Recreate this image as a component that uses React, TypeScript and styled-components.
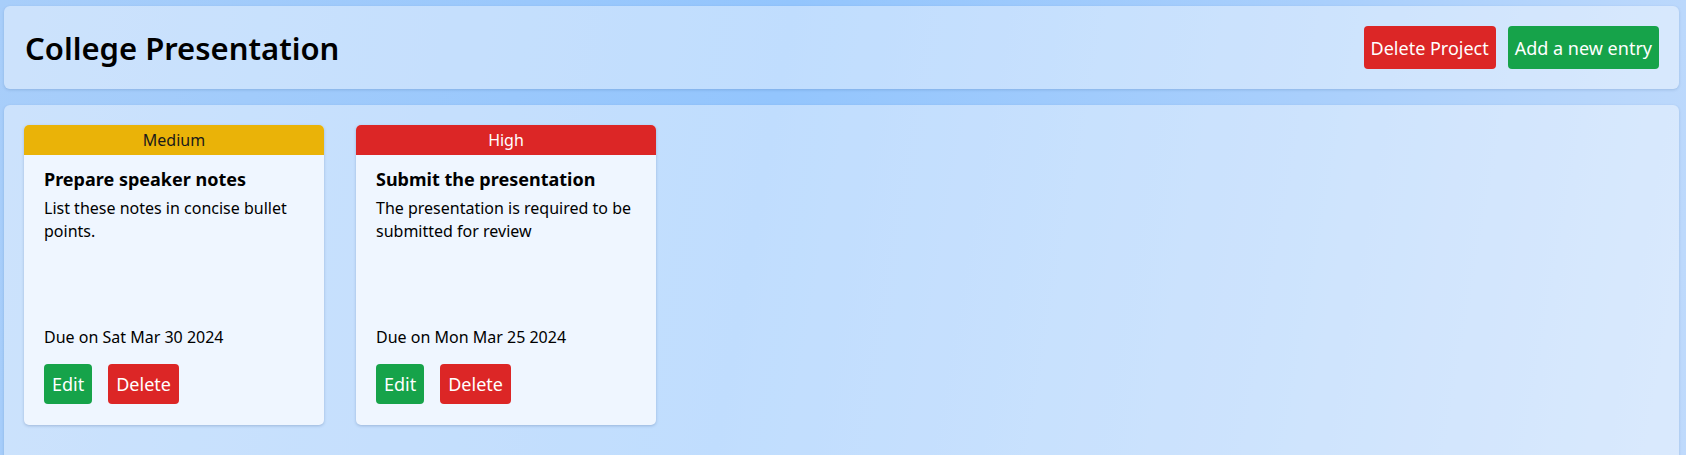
import { createGlobalStyle } from 'styled-components';
import styled from 'styled-components';

const GlobalStyle = createGlobalStyle`
  * {
    box-sizing: border-box;
  }
  html, body {
    margin: 0;
    padding: 0;
    height: 100%;
  }
  body {
    font-family: 'Noto Sans', 'Open Sans', sans-serif;
    color: #000;
    background: linear-gradient(100deg, #a8cefa 0%, #93c5fd 45%, #a9cffc 75%, #bfdafc 100%);
    overflow: hidden;
  }
`;

const green = '#16a34a';
const red = '#dc2626';
const yellow = '#eab308';

const Page = styled.div`
  display: flex;
  flex-direction: column;
  gap: 16px;
  padding: 6px 7px 0 4px;
  min-height: 100vh;
`;

const Panel = styled.div`
  background: rgba(255, 255, 255, 0.42);
  border-radius: 6px;
  box-shadow: 0 1px 3px rgba(30, 64, 120, 0.18);
`;

const Header = styled(Panel)`
  display: flex;
  align-items: center;
  justify-content: space-between;
  height: 83px;
  padding: 0 20px 0 21px;
`;

const Title = styled.h1`
  margin: 0;
  font-size: 31px;
  line-height: 36px;
  font-weight: 600;
`;

const Actions = styled.div`
  display: flex;
  gap: 12px;
`;

const Button = styled.button<{ $tone: 'green' | 'red'; $size?: 'lg' | 'sm' }>`
  border: none;
  border-radius: 4px;
  font-family: inherit;
  font-size: 18px;
  color: #fff;
  cursor: pointer;
  background: ${(p) => (p.$tone === 'green' ? green : red)};
  height: ${(p) => (p.$size === 'sm' ? '40px' : '43px')};
  padding: ${(p) => (p.$size === 'sm' ? '0 8px' : '0 7px')};
  line-height: 1;
`;

const Board = styled(Panel)`
  flex: 1;
  min-height: 360px;
  padding: 20px;
  display: flex;
  align-items: flex-start;
  gap: 32px;
`;

const Card = styled.div`
  width: 300px;
  height: 300px;
  background: #eff6ff;
  border-radius: 5px;
  overflow: hidden;
  display: flex;
  flex-direction: column;
  box-shadow: 0 1px 3px rgba(30, 64, 120, 0.25);
`;

const Priority = styled.div<{ $level: 'Medium' | 'High' }>`
  height: 30px;
  display: flex;
  align-items: center;
  justify-content: center;
  font-size: 16px;
  background: ${(p) => (p.$level === 'High' ? red : yellow)};
  color: ${(p) => (p.$level === 'High' ? '#fff' : '#1a1a1a')};
`;

const CardBody = styled.div`
  flex: 1;
  display: flex;
  flex-direction: column;
  padding: 10px 20px 21px;
`;

const CardTitle = styled.h2`
  margin: 0;
  font-size: 18px;
  line-height: 28px;
  font-weight: 700;
`;

const Description = styled.p`
  margin: 4px 0 0;
  font-size: 16px;
  line-height: 23px;
  flex: 1;
`;

const Due = styled.div`
  font-size: 16px;
  line-height: 24px;
  margin-bottom: 15px;
`;

const CardActions = styled.div`
  display: flex;
  gap: 16px;
`;

type Task = {
  priority: 'Medium' | 'High';
  title: string;
  description: string;
  due: string;
};

const tasks: Task[] = [
  {
    priority: 'Medium',
    title: 'Prepare speaker notes',
    description: 'List these notes in concise bullet points.',
    due: 'Sat Mar 30 2024',
  },
  {
    priority: 'High',
    title: 'Submit the presentation',
    description: 'The presentation is required to be submitted for review',
    due: 'Mon Mar 25 2024',
  },
];

export default function App() {
  return (
    <>
      <GlobalStyle />
      <Page>
        <Header>
          <Title>College Presentation</Title>
          <Actions>
            <Button $tone="red">Delete Project</Button>
            <Button $tone="green">Add a new entry</Button>
          </Actions>
        </Header>
        <Board>
          {tasks.map((task) => (
            <Card key={task.title}>
              <Priority $level={task.priority}>{task.priority}</Priority>
              <CardBody>
                <CardTitle>{task.title}</CardTitle>
                <Description>{task.description}</Description>
                <Due>Due on {task.due}</Due>
                <CardActions>
                  <Button $tone="green" $size="sm">
                    Edit
                  </Button>
                  <Button $tone="red" $size="sm">
                    Delete
                  </Button>
                </CardActions>
              </CardBody>
            </Card>
          ))}
        </Board>
      </Page>
    </>
  );
}
